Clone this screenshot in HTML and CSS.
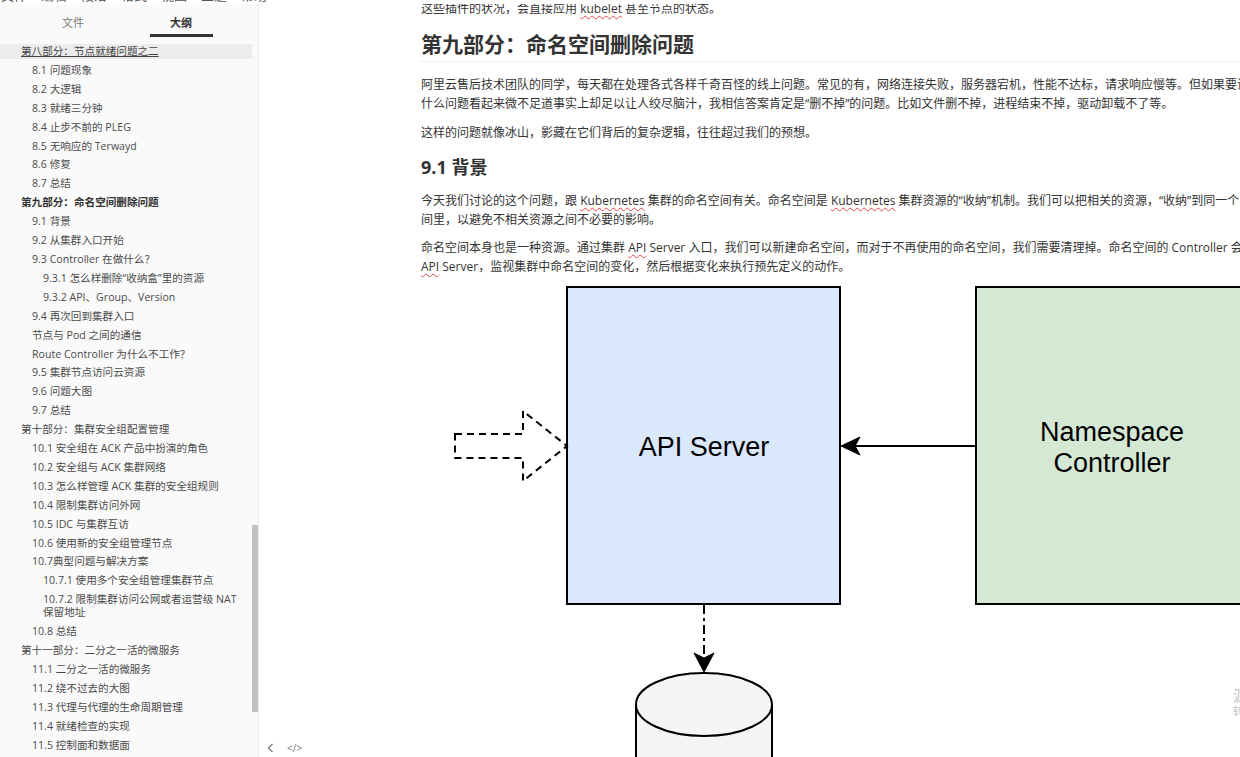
FILE: index.html
```html
<!DOCTYPE html>
<html lang="zh-CN">
<head>
<meta charset="utf-8">
<title>Outline</title>
<link rel="stylesheet" href="styles.css">
</head>
<body>
<div class="menubar"><span>文件</span><span>编辑</span><span>段落</span><span>格式</span><span>视图</span><span>主题</span><span>帮助</span></div>
<div class="app">
  <aside class="sidebar">
    <div class="tabs">
      <div class="tab">文件</div>
      <div class="tab active">大纲</div>
    </div>
    <ul class="outline">
      <li class="l1 hover">第八部分：节点就绪问题之二</li>
      <li class="l2">8.1 问题现象</li>
      <li class="l2">8.2 大逻辑</li>
      <li class="l2">8.3 就绪三分钟</li>
      <li class="l2">8.4 止步不前的 PLEG</li>
      <li class="l2">8.5 无响应的 Terwayd</li>
      <li class="l2">8.6 修复</li>
      <li class="l2">8.7 总结</li>
      <li class="l1 current">第九部分：命名空间删除问题</li>
      <li class="l2">9.1 背景</li>
      <li class="l2">9.2 从集群入口开始</li>
      <li class="l2">9.3 Controller 在做什么？</li>
      <li class="l3">9.3.1 怎么样删除“收纳盒”里的资源</li>
      <li class="l3">9.3.2 API、Group、Version</li>
      <li class="l2">9.4 再次回到集群入口</li>
      <li class="l2">节点与 Pod 之间的通信</li>
      <li class="l2">Route Controller 为什么不工作？</li>
      <li class="l2">9.5 集群节点访问云资源</li>
      <li class="l2">9.6 问题大图</li>
      <li class="l2">9.7 总结</li>
      <li class="l1">第十部分：集群安全组配置管理</li>
      <li class="l2">10.1 安全组在 ACK 产品中扮演的角色</li>
      <li class="l2">10.2 安全组与 ACK 集群网络</li>
      <li class="l2">10.3 怎么样管理 ACK 集群的安全组规则</li>
      <li class="l2">10.4 限制集群访问外网</li>
      <li class="l2">10.5 IDC 与集群互访</li>
      <li class="l2">10.6 使用新的安全组管理节点</li>
      <li class="l2">10.7典型问题与解决方案</li>
      <li class="l3">10.7.1 使用多个安全组管理集群节点</li>
      <li class="l3">10.7.2 限制集群访问公网或者运营级 NAT 保留地址</li>
      <li class="l2">10.8 总结</li>
      <li class="l1">第十一部分：二分之一活的微服务</li>
      <li class="l2">11.1 二分之一活的微服务</li>
      <li class="l2">11.2 绕不过去的大图</li>
      <li class="l2">11.3 代理与代理的生命周期管理</li>
      <li class="l2">11.4 就绪检查的实现</li>
      <li class="l2">11.5 控制面和数据面</li>
    </ul>
    <div class="scroll-thumb"></div>
  </aside>
  <main class="main">
    <article class="doc">
      <p class="p0">这些插件的状况，会直接应用 <span class="typo">kubelet</span> 甚至节点的状态。</p>
      <h1 class="h1">第九部分：命名空间删除问题</h1>
      <p class="p1">阿里云售后技术团队的同学，每天都在处理各式各样千奇百怪的线上问题。常见的有，网络连接失败，服务器宕机，性能不达标，请求响应慢等。但如果要说<br>什么问题看起来微不足道事实上却足以让人绞尽脑汁，我相信答案肯定是“删不掉”的问题。比如文件删不掉，进程结束不掉，驱动卸载不了等。</p>
      <p class="p2">这样的问题就像冰山，影藏在它们背后的复杂逻辑，往往超过我们的预想。</p>
      <h2 class="h2">9.1 背景</h2>
      <p class="p3">今天我们讨论的这个问题，跟 <span class="typo">Kubernetes</span> 集群的命名空间有关。命名空间是 <span class="typo">Kubernetes</span> 集群资源的“收纳”机制。我们可以把相关的资源，“收纳”到同一个空<br>间里，以避免不相关资源之间不必要的影响。</p>
      <p class="p4">命名空间本身也是一种资源。通过集群 <span class="typo">API</span> Server 入口，我们可以新建命名空间，而对于不再使用的命名空间，我们需要清理掉。命名空间的 Controller 会通过<br><span class="typo">API</span> Server，监视集群中命名空间的变化，然后根据变化来执行预先定义的动作。</p>
      <svg class="diagram" width="840" height="480" viewBox="421 280 840 480" xmlns="http://www.w3.org/2000/svg">
        <rect x="567" y="287" width="273" height="317" fill="#dae8fc" stroke="#000" stroke-width="2"/>
        <text x="704" y="456" text-anchor="middle" font-family="Liberation Sans, Arial, sans-serif" font-size="27" fill="#000">API Server</text>
        <rect x="976" y="287" width="273" height="317" fill="#d5e8d4" stroke="#000" stroke-width="2"/>
        <text x="1112" y="441" text-anchor="middle" font-family="Liberation Sans, Arial, sans-serif" font-size="27" fill="#000">Namespace</text>
        <text x="1112" y="472" text-anchor="middle" font-family="Liberation Sans, Arial, sans-serif" font-size="27" fill="#000">Controller</text>
        <line x1="976" y1="446" x2="854" y2="446" stroke="#000" stroke-width="2"/>
        <polygon points="841,446 860,437 855,446 860,455" fill="#000" stroke="#000" stroke-width="1"/>
        <path d="M455,434 L523,434 L523,411 L567,446 L523,481 L523,458 L455,458 Z" fill="none" stroke="#000" stroke-width="2" stroke-dasharray="7 5"/>
        <line x1="704" y1="605" x2="704" y2="660" stroke="#000" stroke-width="2" stroke-dasharray="9 4 3 4"/>
        <polygon points="704,672 694,653 704,658 714,653" fill="#000" stroke="#000" stroke-width="1"/>
        <path d="M636,704.5 L636,800 L772,800 L772,704.5 Z" fill="#f5f5f5"/>
        <line x1="636" y1="704.5" x2="636" y2="800" stroke="#000" stroke-width="2"/>
        <line x1="772" y1="704.5" x2="772" y2="800" stroke="#000" stroke-width="2"/>
        <ellipse cx="704" cy="704.5" rx="68" ry="31.5" fill="#f5f5f5" stroke="#000" stroke-width="2"/>
      </svg>
    </article>
    <div class="footer-icons">
      <svg class="chev" width="7" height="10" viewBox="0 0 7 10"><path d="M5.5 1 L1.5 5 L5.5 9" fill="none" stroke="#777" stroke-width="1.2"/></svg>
      <span class="code">&lt;/&gt;</span>
    </div>
    <div class="watermark"><span class="wm1">源</span><span class="wm2">转</span></div>
  </main>
</div>
</body>
</html>
```
FILE: styles.css
```css
html, body {
  margin: 0;
  padding: 0;
  height: 100%;
  overflow: hidden;
  background: #fff;
}
body {
  font-family: "Open Sans", "Noto Sans CJK SC", sans-serif;
  color: #333;
}
.menubar {
  height: 4px;
  overflow: hidden;
  display: flex;
  margin-left: -6px;
}
.menubar span {
  display: block;
  width: 40px;
  text-align: center;
  font-size: 13px;
  line-height: 16px;
  color: #555;
  transform: translateY(-13px);
}
.app {
  display: flex;
  height: 753px;
}
.sidebar {
  width: 258px;
  flex: none;
  background: #fafafa;
  border-right: 1px solid #ececec;
  position: relative;
  overflow: hidden;
}
.tabs {
  display: flex;
  padding-left: 19px;
  height: 40px;
}
.tab {
  width: 108px;
  text-align: center;
  font-size: 11px;
  line-height: 14px;
  padding-top: 12px;
  color: #777;
  position: relative;
}
.tab.active {
  color: #333;
  font-weight: bold;
}
.tab.active::after {
  content: "";
  position: absolute;
  left: 23px;
  top: 30px;
  width: 63px;
  height: 3px;
  background: #333;
}
.outline {
  list-style: none;
  margin: 0 6px 0 0;
  padding: 0;
  font-size: 10.6px;
  line-height: 12.9px;
  color: #4a4a4a;
}
.outline li {
  padding: 1px 10px 1px 21px;
  margin-bottom: 4px;
}
.outline li.l2 {
  padding-left: 32px;
}
.outline li.l3 {
  padding-left: 43px;
}
.outline li.hover {
  background: #ececec;
  text-decoration: underline;
  color: #444;
}
.outline li.current {
  font-weight: bold;
  color: #333;
}
.scroll-thumb {
  position: absolute;
  right: 0;
  top: 521px;
  width: 6px;
  height: 187px;
  background: #c1c1c1;
}
.main {
  flex: 1;
  position: relative;
  overflow: hidden;
}
.doc {
  padding-left: 162px;
  width: 900px;
  color: #333;
}
.doc p {
  margin: 0;
  font-size: 12px;
  line-height: 19px;
  white-space: nowrap;
}
.doc .p0 { margin-top: -5.5px; }
.doc .h1 {
  margin: 11.5px 0 0;
  font-size: 21px;
  line-height: 30px;
  font-weight: bold;
  padding-bottom: 2px;
  border-bottom: 1px solid #eeeeee;
  color: #333;
}
.doc .p1 { margin-top: 12.5px; }
.doc .p2 { margin-top: 10px; }
.doc .h2 {
  margin: 12.5px 0 0;
  font-size: 18px;
  line-height: 26px;
  font-weight: bold;
  color: #333;
}
.doc .p3 { margin-top: 10.5px; }
.doc .p4 { margin-top: 9px; }
.typo {
  text-decoration: underline wavy #e64545;
  text-decoration-thickness: 1px;
  text-underline-offset: 2px;
}
.diagram {
  display: block;
  margin-top: 4.5px;
}
.footer-icons {
  position: absolute;
  left: 8px;
  bottom: 4px;
  display: flex;
  align-items: center;
  gap: 13px;
}
.footer-icons .code {
  font-size: 10px;
  color: #777;
  line-height: 10px;
}
.watermark {
  position: absolute;
  left: 974px;
  top: 682px;
  display: flex;
  flex-direction: column;
  color: #c4c4c4;
}
.wm1 { font-size: 15px; line-height: 19px; }
.wm2 { font-size: 11px; line-height: 14px; }
```
